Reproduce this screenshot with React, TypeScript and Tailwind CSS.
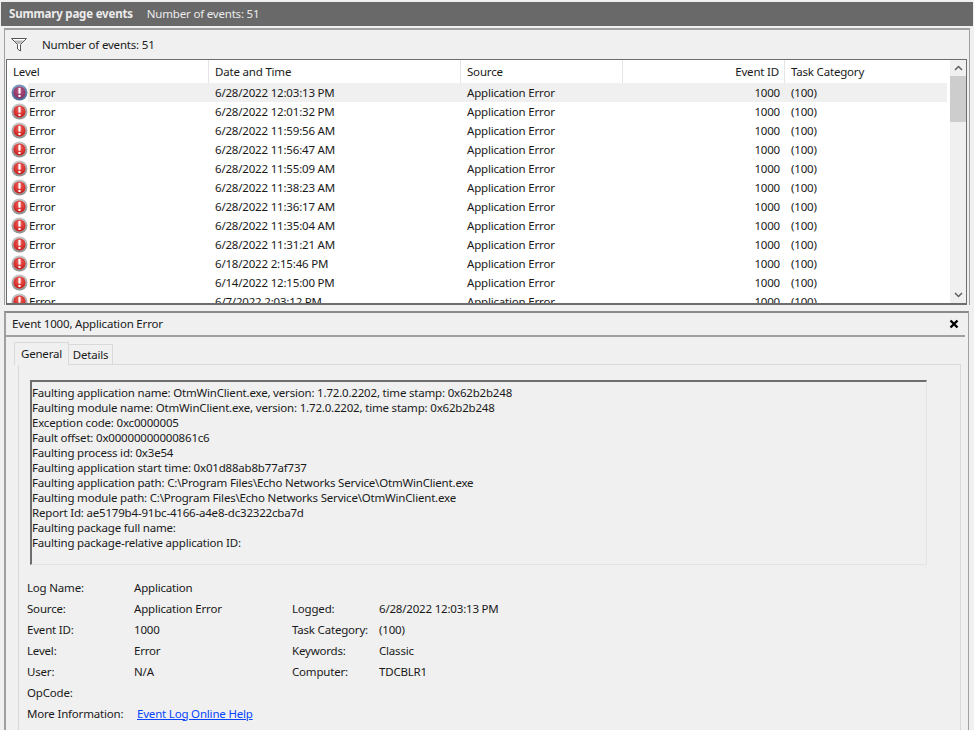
const rows = [
  "6/28/2022 12:03:13 PM",
  "6/28/2022 12:01:32 PM",
  "6/28/2022 11:59:56 AM",
  "6/28/2022 11:56:47 AM",
  "6/28/2022 11:55:09 AM",
  "6/28/2022 11:38:23 AM",
  "6/28/2022 11:36:17 AM",
  "6/28/2022 11:35:04 AM",
  "6/28/2022 11:31:21 AM",
  "6/18/2022 2:15:46 PM",
  "6/14/2022 12:15:00 PM",
  "6/7/2022 2:03:12 PM",
];

const lines = [
  "Faulting application name: OtmWinClient.exe, version: 1.72.0.2202, time stamp: 0x62b2b248",
  "Faulting module name: OtmWinClient.exe, version: 1.72.0.2202, time stamp: 0x62b2b248",
  "Exception code: 0xc0000005",
  "Fault offset: 0x00000000000861c6",
  "Faulting process id: 0x3e54",
  "Faulting application start time: 0x01d88ab8b77af737",
  "Faulting application path: C:\\Program Files\\Echo Networks Service\\OtmWinClient.exe",
  "Faulting module path: C:\\Program Files\\Echo Networks Service\\OtmWinClient.exe",
  "Report Id: ae5179b4-91bc-4166-a4e8-dc32322cba7d",
  "Faulting package full name:",
  "Faulting package-relative application ID:",
];

function ErrorIcon({ selected }: { selected: boolean }) {
  const id = selected ? "s" : "n";
  return (
    <svg width="17" height="17" viewBox="0 0 17 17" className="shrink-0">
      <defs>
        <radialGradient id={`g${id}`} cx="50%" cy="35%" r="65%">
          <stop offset="0%" stopColor={selected ? "#b85a86" : "#f4645c"} />
          <stop offset="100%" stopColor={selected ? "#8a2c5e" : "#c81a1a"} />
        </radialGradient>
        <linearGradient id={`r${id}`} x1="0" y1="0" x2="0" y2="1">
          <stop offset="0%" stopColor={selected ? "#7f9cc0" : "#c8c8c8"} />
          <stop offset="100%" stopColor={selected ? "#4a6a96" : "#8e8e8e"} />
        </linearGradient>
      </defs>
      <circle cx="8.5" cy="8.5" r="8" fill={`url(#r${id})`} />
      <circle cx="8.5" cy="8.5" r="6" fill={`url(#g${id})`} />
      <rect x="7.4" y="3.8" width="2.2" height="6" rx="0.7" fill="#fff" />
      <rect x="7.4" y="10.9" width="2.2" height="2.2" rx="0.7" fill="#fff" />
    </svg>
  );
}

function Funnel() {
  return (
    <svg width="16" height="14" viewBox="0 0 16 14">
      <path d="M0.5 0.5H15.5L9.5 6.5V13L6.5 11V6.5Z" fill="#fff" stroke="#555" strokeWidth="1" />
      <path d="M3 2.5H13L9 6H7Z" fill="#b5b5b5" />
    </svg>
  );
}

function Field({ label, value, w }: { label: string; value?: string; w: string }) {
  return (
    <div className="flex h-[21px] items-center">
      <span className={`${w} shrink-0`}>{label}</span>
      <span>{value}</span>
    </div>
  );
}

export default function App() {
  return (
    <div
      className="w-[974px] h-[730px] overflow-hidden bg-[#f0f0f0] text-[11.5px] leading-[16px] tracking-[-0.19px] text-[#1a1a1a]"
      style={{ fontFamily: '"Noto Sans", "Open Sans", sans-serif' }}
    >
      <div className="mx-px mt-0.5 h-[24px] flex items-center gap-[14px] px-2 bg-[#696969] text-[#ececec]">
        <span className="font-bold">Summary page events</span>
        <span>Number of events: 51</span>
      </div>

      <div className="mx-[4px] mt-[2px] border-t-2 border-x border-[#a0a0a0] pl-px pr-[2px]">
        <div className="h-[29px] flex items-center gap-[15px] pl-[5px]">
          <Funnel />
          <span>Number of events: 51</span>
        </div>
        <div className="h-[246px] border border-[#6d6d6d] border-b-2 bg-white flex overflow-hidden">
          <div className="w-[944px] overflow-hidden">
            <div className="h-[23px] grid grid-cols-[202px_252px_162px_162px_1fr] items-stretch">
              <div className="pl-[6px] flex items-center border-r border-[#e5e5e5]">Level</div>
              <div className="pl-[6px] flex items-center border-r border-[#e5e5e5]">Date and Time</div>
              <div className="pl-[6px] flex items-center border-r border-[#e5e5e5]">Source</div>
              <div className="pr-[5px] flex items-center justify-end border-r border-[#e5e5e5]">Event ID</div>
              <div className="pl-[6px] flex items-center">Task Category</div>
            </div>
            {rows.map((r, i) => (
              <div key={r} className="h-[19px] grid grid-cols-[202px_252px_162px_162px_1fr] items-center">
                <div className="flex items-center pl-[4px] h-full">
                  <ErrorIcon selected={i === 0} />
                  <span className={`pl-px h-full flex-1 flex items-center ${i === 0 ? "bg-[#f0f0f0]" : ""}`}>Error</span>
                </div>
                <div className={`pl-[6px] h-full flex items-center ${i === 0 ? "bg-[#f0f0f0]" : ""}`}>{r}</div>
                <div className={`pl-[6px] h-full flex items-center ${i === 0 ? "bg-[#f0f0f0]" : ""}`}>Application Error</div>
                <div className={`pr-[5px] h-full flex items-center justify-end ${i === 0 ? "bg-[#f0f0f0]" : ""}`}>1000</div>
                <div className={`pl-[6px] h-full flex items-center ${i === 0 ? "bg-[#f0f0f0]" : ""}`}>(100)</div>
              </div>
            ))}
          </div>
          <div className="w-[16px] ml-[3px] bg-[#f0f0f0] flex flex-col items-center">
            <div className="h-[16px] flex items-center justify-center">
              <svg width="9" height="6" viewBox="0 0 9 6"><path d="M1 5L4.5 1.5L8 5" fill="none" stroke="#606060" strokeWidth="1.5" /></svg>
            </div>
            <div className="w-full h-[46px] bg-[#cdcdcd]" />
            <div className="flex-1" />
            <div className="h-[17px] flex items-center justify-center">
              <svg width="9" height="6" viewBox="0 0 9 6"><path d="M1 1L4.5 4.5L8 1" fill="none" stroke="#606060" strokeWidth="1.5" /></svg>
            </div>
          </div>
        </div>
      </div>

      <div className="ml-[4px] mr-[5px] mt-[6px] h-[419px] border-t-2 border-l-2 border-r border-[#a0a0a0] border-t-[#8a8a8a]">
        <div className="h-[22px] flex items-center justify-between pl-[6px] pr-[7px] mr-[2px]">
          <span>Event 1000, Application Error</span>
          <svg width="10" height="10" viewBox="0 0 10 10"><path d="M1.5 1.5L8.5 8.5M8.5 1.5L1.5 8.5" stroke="#000" strokeWidth="2.4" /></svg>
        </div>
        <div className="h-[2px] bg-[#a0a0a0] mr-[3px]" />
        <div className="pl-[8px] pt-[5px]">
          <div className="flex items-end h-[23px] relative z-10">
            <div className="h-[23px] w-[55px] flex items-center justify-center bg-[#f0f0f0] border border-b-0 border-[#d9d9d9]">General</div>
            <div className="h-[21px] w-[44px] flex items-center justify-center bg-[#f0f0f0] border border-l-0 border-[#d9d9d9]">Details</div>
          </div>
          <div className="-mt-px ml-[4px] mr-[7px] h-[380px] border border-[#d9d9d9] pl-[8px] pt-[15px]">
            <div className="ml-[3px] w-[897px] h-[185px] border-t-2 border-l-2 border-r border-b border-[#6d6d6d] border-r-[#e3e3e3] border-b-[#e3e3e3] pt-[3px]">
              {lines.map((l) => (
                <div key={l} className="h-[15px] leading-[15px] whitespace-nowrap">{l}</div>
              ))}
            </div>
            <div className="pt-[12px] flex">
              <div className="w-[265px]">
                <Field label="Log Name:" value="Application" w="w-[107px]" />
                <Field label="Source:" value="Application Error" w="w-[107px]" />
                <Field label="Event ID:" value="1000" w="w-[107px]" />
                <Field label="Level:" value="Error" w="w-[107px]" />
                <Field label="User:" value="N/A" w="w-[107px]" />
                <Field label="OpCode:" w="w-[107px]" />
                <div className="flex h-[21px] items-center">
                  <span className="w-[110px] shrink-0">More Information:</span>
                  <span className="text-[#0645ff] underline">Event Log Online Help</span>
                </div>
              </div>
              <div className="pt-[21px]">
                <Field label="Logged:" value="6/28/2022 12:03:13 PM" w="w-[87px]" />
                <Field label="Task Category:" value="(100)" w="w-[87px]" />
                <Field label="Keywords:" value="Classic" w="w-[87px]" />
                <Field label="Computer:" value="TDCBLR1" w="w-[87px]" />
              </div>
            </div>
          </div>
        </div>
      </div>
    </div>
  );
}
